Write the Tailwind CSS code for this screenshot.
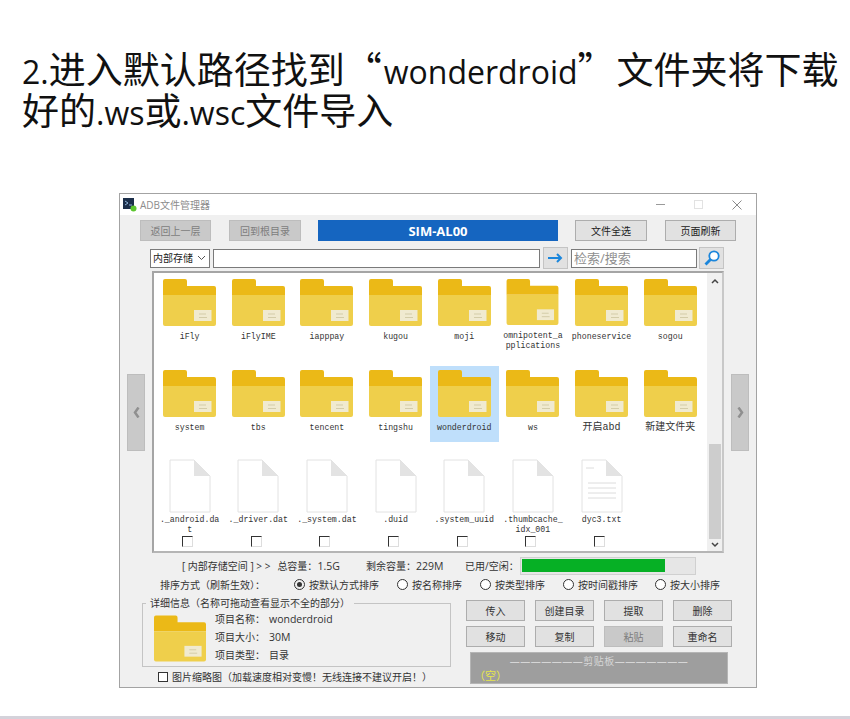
<!DOCTYPE html>
<html lang="zh">
<head>
  <meta charset="UTF-8" />
  <title>ADB文件管理器</title>
  <script src="https://cdn.jsdelivr.net/npm/@tailwindcss/browser@4"></script>
</head>
<body class="bg-white w-[850px] h-[719px] overflow-hidden font-['Open_Sans','Noto_Sans_CJK_SC',sans-serif] text-[#222]">
  <svg class="hidden">
    <symbol id="folder" viewBox="0 0 53 47">
      <path d="M0 2a2 2 0 0 1 2-2h20a2 2 0 0 1 2 2v5h27a2 2 0 0 1 2 2v7H0z" fill="#ebb917" />
      <path d="M0 16h53v29a2 2 0 0 1-2 2H2a2 2 0 0 1-2-2z" fill="#efcf4b" />
      <rect x="31" y="31" width="17.5" height="11" fill="#f0ead0" />
      <path d="M36 35h7M36 38.500h8" stroke="#d3cca8" stroke-width="1" />
    </symbol>
    <symbol id="file" viewBox="0 0 42 54">
      <path d="M1 1h24l16 16v36H1z" fill="#fff" stroke="#e2e2e2" />
      <path d="M25 1l16 16H25z" fill="#e3e3e3" />
    </symbol>
  </svg>

  <h1 class="pt-[49px] pl-[22px] h-[193px] text-[37px] leading-[39px] font-normal text-[#111] whitespace-nowrap"><span class="text-[32px]">2.</span>进入默认路径找到<span class="font-['Noto_Sans_CJK_SC']">“</span><span class="ml-[2px] text-[32px]">wonderdroid</span><span class="font-['Noto_Sans_CJK_SC']">”</span><span class="ml-[2px]">文件夹将下载</span><br />好的<span class="text-[32px]">.ws</span>或<span class="text-[32px]">.wsc</span>文件导入</h1>

  <div class="ml-[119px] w-[638px] h-[495px] border border-[#a3a3a3] bg-[#f0f0f0] flex flex-col text-[10px] leading-[14px] whitespace-nowrap">
    <div class="h-[21px] shrink-0 bg-white flex items-center pl-[3px] text-[#8c8c8c]">
      <svg class="w-[14px] h-[14px]" viewBox="0 0 14 14"><rect width="11" height="11" y="0" fill="#1c2f4a" /><path d="M2 3l3 2-3 2M6 7h3" stroke="#8fb4d8" fill="none" /><circle cx="10.500" cy="10.500" r="3" fill="#5cc62f" /></svg>
      <span class="ml-[3px]">ADB文件管理器</span>
      <div class="ml-auto flex items-center mr-[14px]">
        <span class="w-[9px] h-px bg-[#9a9a9a]"></span>
        <span class="ml-[29px] w-[9px] h-[9px] border border-[#e2e2e2]"></span>
        <svg class="ml-[29px] w-[10px] h-[10px]" viewBox="0 0 10 10"><path d="M.5.5l9 9M9.500.5l-9 9" stroke="#8a8a8a" fill="none" /></svg>
      </div>
    </div>

    <div class="flex mt-[5px] h-[21px] shrink-0 pl-[20px]">
      <button class="w-[71px] bg-[#c9c9c9] border border-[#bdbdbd] text-[#7d7d7d]">返回上一层</button>
      <button class="ml-[18px] w-[72px] bg-[#c9c9c9] border border-[#bdbdbd] text-[#7d7d7d]">回到根目录</button>
      <div class="ml-[17px] w-[240px] bg-[#1565c0] text-white font-bold text-[13px] flex items-center justify-center">SIM-AL00</div>
      <button class="ml-[17px] w-[72px] bg-[#e1e1e1] border border-[#adadad]">文件全选</button>
      <button class="ml-[18px] w-[71px] bg-[#e1e1e1] border border-[#adadad]">页面刷新</button>
    </div>

    <div class="flex items-center mt-[6px] h-[22px] shrink-0 pl-[30px]">
      <div class="w-[60px] h-[19px] bg-white border border-[#7a7a7a] flex items-center pl-[2px]">
        内部存储
        <svg class="ml-auto mr-[3px] w-[9px] h-[6px]" viewBox="0 0 9 6"><path d="M1 1l3.500 3.500L8 1" stroke="#555" fill="none" /></svg>
      </div>
      <div class="ml-[3px] w-[327px] h-[19px] bg-white border border-[#7a7a7a]"></div>
      <div class="ml-[3px] w-[25px] h-[22px] bg-[#e1e1e1] border border-[#c4c4c4] flex items-center justify-center">
        <svg class="w-[15px] h-[10px]" viewBox="0 0 15 10"><path d="M0 5h13M9 1l4 4-4 4" stroke="#1b86dc" stroke-width="2" fill="none" /></svg>
      </div>
      <div class="ml-[3px] w-[126px] h-[19px] bg-white border border-[#7a7a7a] flex items-center pl-[2px] text-[13px] text-[#8f8f8f]">检索/搜索</div>
      <div class="ml-[2px] w-[25px] h-[22px] bg-[#e1e1e1] border border-[#c4c4c4] flex items-center justify-center">
        <svg class="w-[16px] h-[16px]" viewBox="0 0 16 16"><circle cx="10" cy="6" r="4.700" fill="#fff" stroke="#1b86dc" stroke-width="1.800" /><path d="M6.500 9.500L1.500 14.500" stroke="#1b86dc" stroke-width="2.800" /></svg>
      </div>
    </div>

    <div class="flex items-center mt-[2px] h-[282px] shrink-0 pl-[7px]">
      <div class="w-[18px] h-[77px] bg-[#c9c9c9] border border-[#bdbdbd] flex items-center justify-center">
        <svg class="w-[7px] h-[11px]" viewBox="0 0 7 11"><path d="M5.500 .5L2 5.500l3.500 5" stroke="#8f8f8f" stroke-width="2.500" fill="none" /></svg>
      </div>
      <div class="ml-[7px] w-[572px] h-[282px] bg-white border-2 border-t-2 border-[#a5a5a5] border-r-[#c8c8c8] border-b-[#b5b5b5] flex">
        <div id="grid" class="w-[553px] grid grid-cols-[repeat(8,68.670px)] auto-rows-[91.500px] content-start pl-[1.300px] pt-[1.500px] font-['Liberation_Mono','Noto_Sans_CJK_SC',monospace] text-[8.250px] leading-[10px] text-[#333]"></div>
        <div class="w-[15px] ml-auto bg-[#f0f0f0] flex flex-col items-center">
          <svg class="mt-[5px] w-[8px] h-[6px]" viewBox="0 0 8 6"><path d="M1 5l3-3 3 3" stroke="#444" stroke-width="1.500" fill="none" /></svg>
          <div class="mt-[160px] w-[12px] h-[95px] bg-[#cdcdcd]"></div>
          <svg class="mt-[3px] w-[8px] h-[6px]" viewBox="0 0 8 6"><path d="M1 1l3 3 3-3" stroke="#444" stroke-width="1.500" fill="none" /></svg>
        </div>
      </div>
      <div class="ml-[7px] w-[18px] h-[77px] bg-[#c9c9c9] border border-[#bdbdbd] flex items-center justify-center">
        <svg class="w-[7px] h-[11px]" viewBox="0 0 7 11"><path d="M1.500 .5L5 5.500l-3.500 5" stroke="#8f8f8f" stroke-width="2.500" fill="none" /></svg>
      </div>
    </div>

    <div class="flex items-center mt-[4px] h-[18px] shrink-0 pl-[62px] text-[#333]">
      <span class="w-[184px]">[ 内部存储空间 ] &gt; &gt;<span class="ml-[7px]">总容量：</span><span class="text-[10.500px]">1.5G</span></span>
      <span class="w-[99px]">剩余容量：<span class="text-[10.500px]">229M</span></span>
      <span class="w-[55px]">已用/空闲：</span>
      <div class="w-[176px] h-[18px] bg-[#e6e6e6] border border-[#d0d0d0] p-[1px]">
        <div class="w-[143px] h-[13px] bg-[#06b025]"></div>
      </div>
    </div>

    <div class="flex items-center h-[19px] shrink-0 pl-[40px] text-[#333]">
      <span class="w-[134px]">排序方式（刷新生效）：</span>
      <label class="w-[103px] flex items-center gap-[4px]"><span class="w-[11px] h-[11px] rounded-full border border-[#333] flex items-center justify-center"><span class="w-[5px] h-[5px] rounded-full bg-[#333]"></span></span>按默认方式排序</label>
      <label class="w-[83px] flex items-center gap-[4px]"><span class="w-[11px] h-[11px] rounded-full border border-[#333] bg-white"></span>按名称排序</label>
      <label class="w-[83px] flex items-center gap-[4px]"><span class="w-[11px] h-[11px] rounded-full border border-[#333] bg-white"></span>按类型排序</label>
      <label class="w-[92px] flex items-center gap-[4px]"><span class="w-[11px] h-[11px] rounded-full border border-[#333] bg-white"></span>按时间戳排序</label>
      <label class="flex items-center gap-[4px]"><span class="w-[11px] h-[11px] rounded-full border border-[#333] bg-white"></span>按大小排序</label>
    </div>

    <div class="flex flex-1 min-h-0 pl-[22px] text-[#333]">
      <div class="w-[309px] shrink-0">
        <fieldset class="mt-[2px] h-[71px] border border-[#c4c4c4] pl-[11px]">
          <legend class="-ml-[8px] px-[4px]">详细信息（名称可拖动查看显示不全的部分）</legend>
          <div class="flex">
            <svg class="mt-[5px] w-[52px] h-[47px]"><use href="#folder" /></svg>
            <dl class="ml-[9px] grid grid-cols-[54px_1fr] auto-rows-[18px] items-center">
              <dt>项目名称：</dt><dd class="text-[10.500px]">wonderdroid</dd>
              <dt>项目大小：</dt><dd class="text-[10.500px]">30M</dd>
              <dt>项目类型：</dt><dd>目录</dd>
            </dl>
          </div>
        </fieldset>
        <div class="flex items-center mt-[3px] pl-[16px] h-[14px] gap-[4px]">
          <span class="w-[10px] h-[10px] bg-white border border-[#333]"></span>
          图片缩略图（加载速度相对变慢！无线连接不建议开启！）
        </div>
      </div>
      <div class="ml-[15px]">
        <div class="grid grid-cols-[repeat(4,59px)] auto-rows-[21px] gap-x-[10px] gap-y-[5px] mt-[6px]">
          <button class="bg-[#e1e1e1] border border-[#adadad]">传入</button>
          <button class="bg-[#e1e1e1] border border-[#adadad]">创建目录</button>
          <button class="bg-[#e1e1e1] border border-[#adadad]">提取</button>
          <button class="bg-[#e1e1e1] border border-[#adadad]">删除</button>
          <button class="bg-[#e1e1e1] border border-[#adadad]">移动</button>
          <button class="bg-[#e1e1e1] border border-[#adadad]">复制</button>
          <button class="bg-[#c9c9c9] border border-[#bdbdbd] text-[#7d7d7d]">粘贴</button>
          <button class="bg-[#e1e1e1] border border-[#adadad]">重命名</button>
        </div>
        <div class="ml-[4px] mt-[5px] w-[258px] h-[32px] bg-[#9e9e9e] border border-[#b5b5b5] pl-[3px]">
          <div class="text-center text-[#d6d6d6] pr-[3px] leading-[16px] tracking-[0.5px]">———————剪贴板———————</div>
          <div class="text-[11px] text-[#e6e64a] leading-[14px]">（空）</div>
        </div>
      </div>
    </div>
  </div>

  <div class="mt-[28px] h-[4px] bg-[#d4d2da]"></div>

  <script>
    const items = [
      ['folder', 'iFly'], ['folder', 'iFlyIME'], ['folder', 'iapppay'], ['folder', 'kugou'],
      ['folder', 'moji'], ['folder', 'omnipotent_a pplications'], ['folder', 'phoneservice'], ['folder', 'sogou'],
      ['folder', 'system'], ['folder', 'tbs'], ['folder', 'tencent'], ['folder', 'tingshu'],
      ['folder', 'wonderdroid', true], ['folder', 'ws'], ['folder', '开启abd'], ['folder', '新建文件夹'],
      ['file', '._android.da t'], ['file', '._driver.dat'], ['file', '._system.dat'], ['file', '.duid'],
      ['file', '.system_uuid'], ['file', '.thumbcache_ idx_001'], ['txt', 'dyc3.txt']
    ];

    const renderCell = ([type, name, selected]) => {
      const label = /[\u4e00-\u9fff]/.test(name) ? `<span class="text-[10px]">${name}</span>` : name;
      const rows = name.split(' ').map(part => `<div class="h-[10px]">${part === name ? label : part}</div>`).join('');
      if (type === 'folder') {
        return `<div class="h-[76px] flex flex-col items-center ${selected ? 'bg-[#bfdffb]' : ''}">
          <svg class="mt-[4px] w-[53px] h-[47px]"><use href="#folder" /></svg>
          <div class="mt-[6px] text-center">${rows}</div>
        </div>`;
      }
      const lines = type === 'txt'
        ? '<path d="M5 9h8M7 24h28M7 29h28M7 34h28M7 39h28" stroke="#dcdcdc" />'
        : '';
      return `<div class="h-[91.500px] flex flex-col items-center">
        <svg class="mt-[1px] w-[42px] h-[54px]" viewBox="0 0 42 54"><use href="#file" />${lines}</svg>
        <div class="mt-[2px] h-[20px] text-center">${rows}</div>
        <span class="mt-[1px] mr-[4px] w-[11px] h-[11px] bg-white border border-[#ddd] border-t-[#333] border-l-[#333]"></span>
      </div>`;
    };

    document.getElementById('grid').innerHTML = items.map(renderCell).join('');
  </script>
</body>
</html>
